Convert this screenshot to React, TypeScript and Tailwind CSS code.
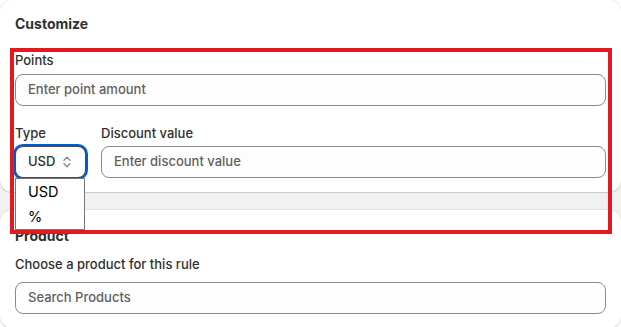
import React from "react";

function SelectorIcon() {
  return (
    <svg width="10" height="14" viewBox="0 0 10 14" fill="none" stroke="#8a8a8a" strokeWidth="1.4" strokeLinecap="round" strokeLinejoin="round">
      <path d="M2 5.2 5 2.2 8 5.2" />
      <path d="M2 8.8 5 11.8 8 8.8" />
    </svg>
  );
}

function TextField({ placeholder }: { placeholder: string }) {
  return (
    <div className="flex h-[32px] w-full items-center rounded-[8px] border border-[#8a8a8a] bg-[#fdfdfd] px-3">
      <span className="text-[13px] text-[#616161]">{placeholder}</span>
    </div>
  );
}

export default function App() {
  return (
    <div
      className="relative h-[327px] w-[621px] overflow-hidden bg-white font-[450] text-[#303030]"
      style={{ fontFamily: "Inter, 'Noto Sans', sans-serif" }}
    >
      <div className="flex flex-col">
        {/* Customize card */}
        <div className="relative z-20 rounded-xl bg-white px-[15px] pb-[14px] pt-[14px] shadow-[0_0_0_1px_rgba(0,0,0,0.06),0_1px_1px_rgba(0,0,0,0.12)]">
          <h2 className="text-[14px] font-[650] leading-5">Customize</h2>

          <div className="mt-4">
            <label className="block text-[13px] leading-5">Points</label>
            <div className="mt-[4px]">
              <TextField placeholder="Enter point amount" />
            </div>
          </div>

          <div className="mt-[17px] flex gap-[15px]">
            <div className="relative w-[71px] shrink-0">
              <label className="block text-[13px] leading-5">Type</label>
              <div className="relative mt-[3px]">
                <div className="flex h-[32px] items-center justify-between rounded-[8px] border border-[#4a4a4a] bg-[#fdfdfd] pl-3 pr-[13px] ring-2 ring-[#005bd3]">
                  <span className="text-[13px] text-[#303030]">USD</span>
                  <SelectorIcon />
                </div>
                <div className="absolute left-0 top-full w-[70px] border border-[#767676] bg-white text-[14.5px] font-normal text-black">
                  <div className="flex h-[25px] items-center pl-3">USD</div>
                  <div className="flex h-[25px] items-center pl-3">%</div>
                </div>
              </div>
            </div>
            <div className="flex-1">
              <label className="block text-[13px] leading-5">Discount value</label>
              <div className="mt-[3px]">
                <TextField placeholder="Enter discount value" />
              </div>
            </div>
          </div>
        </div>

        <div className="-my-3 h-[42px] bg-[#f1f1f1]" />

        {/* Product card */}
        <div className="relative z-10 rounded-xl bg-white px-[15px] pb-[14px] pt-4 shadow-[0_0_0_1px_rgba(0,0,0,0.06),0_1px_1px_rgba(0,0,0,0.12)]">
          <h2 className="text-[14px] font-[650] leading-5">Product</h2>
          <p className="mt-2 text-[13px] leading-5">Choose a product for this rule</p>
          <div className="mt-2">
            <TextField placeholder="Search Products" />
          </div>
        </div>
      </div>

      {/* annotation box */}
      <div className="pointer-events-none absolute left-[10px] top-[48px] z-30 h-[186px] w-[602px] border-[4px] border-[#e3191f]" />
    </div>
  );
}
